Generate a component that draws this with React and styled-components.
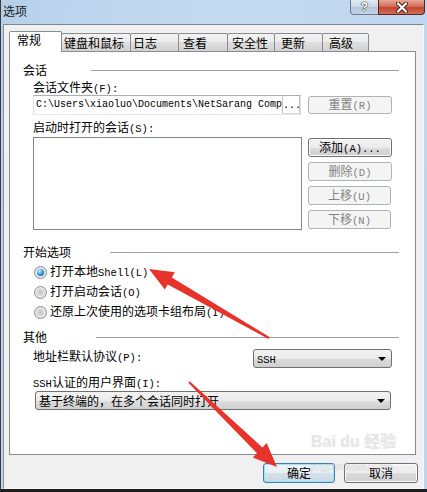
import React from "react";
import styled, { createGlobalStyle } from "styled-components";

const GlobalStyle = createGlobalStyle`
  html, body {
    margin: 0;
    padding: 0;
    background: #bcd4ec;
  }
  body {
    font-family: "Noto Sans CJK SC", "Liberation Sans", sans-serif;
    font-size: 12px;
    color: #000;
    text-autospace: no-autospace;
  }
  * {
    box-sizing: border-box;
  }
`;

const Window = styled.div`
  position: relative;
  width: 427px;
  height: 492px;
  display: flex;
  flex-direction: column;
  background: linear-gradient(100deg, #b7d0ea 0%, #c5dbf1 45%, #bcd4ee 100%);
  border-left: 1px solid #3c3c3c;
  border-bottom: 3px solid #1e1e1e;
  overflow: hidden;
`;

const TitleBar = styled.div`
  display: flex;
  align-items: flex-start;
  height: 24px;
`;

const Title = styled.div`
  padding: 4px 0 0 2px;
  line-height: 14px;
  color: #1b1b1b;
`;

const Controls = styled.div`
  display: flex;
  margin-left: auto;
  margin-right: 2px;
`;

const HelpButton = styled.div`
  width: 28px;
  height: 15px;
  border: 1px solid #6b7b8f;
  border-top: none;
  border-right: none;
  border-radius: 0 0 0 4px;
  background: linear-gradient(#e3ebf4, #c9d6e5 50%, #b6c6d9 50%, #c3d2e4);
  display: flex;
  align-items: center;
  justify-content: center;
  font-family: "Liberation Sans", sans-serif;
  font-weight: bold;
  font-size: 12px;
  line-height: 12px;
  color: #fff;
  text-shadow: 0 0 1px #333, 0 0 1px #333, 0 0 1px #333;
`;

const CloseButton = styled.div`
  width: 47px;
  height: 15px;
  border: 1px solid #5a231d;
  border-top: none;
  border-radius: 0 0 4px 0;
  background: linear-gradient(#e8a899, #d36f5f 45%, #c0452f 55%, #d0705a);
  display: flex;
  align-items: center;
  justify-content: center;
`;

const Client = styled.div`
  flex: 1;
  display: flex;
  flex-direction: column;
  margin: 0 3px 0 2px;
  border: 1px solid;
  border-color: #7e8691 #fafafa #f6f6f6 #8a8f96;
  background: #f0f0f0;
  padding: 6px 5px 5px 5px;
`;

const Tabs = styled.div`
  display: flex;
  align-items: flex-end;
  height: 21px;
  margin-bottom: -1px;
  position: relative;
  z-index: 1;
`;

const Tab = styled.div`
  width: ${(p) => p.$w}px;
  height: ${(p) => (p.$active ? 21 : 19)}px;
  margin-left: -1px;
  padding-left: ${(p) => p.$pad}px;
  border: 1px solid #898c95;
  border-bottom: ${(p) => (p.$active ? "none" : "1px solid #898c95")};
  border-radius: 2px 2px 0 0;
  background: ${(p) =>
    p.$active
      ? "#ffffff"
      : "linear-gradient(#f3f3f3 0%, #ebebeb 50%, #dedede 50%, #d2d2d2 100%)"};
  line-height: ${(p) => (p.$active ? 16 : 17)}px;
  position: relative;
  z-index: ${(p) => (p.$active ? 2 : 1)};
  white-space: nowrap;

  &:first-child {
    margin-left: 0;
  }
`;

const Panel = styled.div`
  flex: 1;
  margin-right: 2px;
  border: 1px solid #898c95;
  background: #fff;
  padding: 11px 16px 0 13px;
`;

const SectionHead = styled.div`
  display: flex;
  align-items: center;
  height: 14px;
  line-height: 14px;
  margin-top: ${(p) => p.$top || 0}px;
`;

const Rule = styled.div`
  flex: 1;
  height: 1px;
  background: #a0a0a0;
  margin-left: ${(p) => p.$gap}px;
`;

const SectionBody = styled.div`
  padding: 0 7px 0 10px;
`;

const Label = styled.div`
  line-height: 14px;
  height: 14px;
  margin-top: ${(p) => p.$top || 0}px;
  white-space: nowrap;
`;

const Latin = styled.span`
  font-family: "Liberation Mono", monospace;
  font-size: 10.5px;
`;

const Row = styled.div`
  display: flex;
  align-items: ${(p) => p.$align || "center"};
  margin-top: ${(p) => p.$top || 0}px;
`;

const PathField = styled.div`
  display: flex;
  width: 268px;
  height: 20px;
  border: 1px solid;
  border-color: #abadb3 #dbdfe6 #e3e9ef #e2e3ea;
  background: #fff;
`;

const PathText = styled.span`
  flex: 1;
  white-space: nowrap;
  font-family: "Liberation Mono", monospace;
  font-size: 10px;
  line-height: 18px;
  padding-left: 2px;
`;

const BrowseButton = styled.span`
  width: 18px;
  border-left: 1px solid #c4c4c4;
  border-right: 1px solid #c4c4c4;
  border-bottom: 1px solid #d8d8d8;
  font-family: "Liberation Mono", monospace;
  font-size: 10px;
  line-height: 20px;
  text-align: center;
`;

const Button = styled.button`
  width: ${(p) => p.$w}px;
  height: ${(p) => p.$h || 19}px;
  margin-left: ${(p) => (p.$push ? "auto" : "0")};
  padding: 0;
  border: 1px solid #707070;
  border-radius: 3px;
  background: linear-gradient(#f2f2f2 0%, #ebebeb 50%, #dddddd 50%, #cfcfcf 100%);
  box-shadow: inset 0 0 0 1px #fbfbfb;
  font: inherit;
  line-height: 14px;
  color: #000;

  &:disabled {
    border-color: #adb2b5;
    background: #f4f4f4;
    box-shadow: none;
    color: #838383;
  }
`;

const DefaultButton = styled(Button)`
  border-color: #3c7fb1;
  box-shadow: inset 0 0 0 1px #9fe2fb;
  background: linear-gradient(#f0f6fa 0%, #e6eef4 50%, #d6e1ea 50%, #cad7e2 100%);
`;

const ListBox = styled.div`
  width: 269px;
  height: 93px;
  border: 1px solid #828790;
  background: #fff;
`;

const ButtonColumn = styled.div`
  display: flex;
  flex-direction: column;
  align-items: flex-start;
  gap: 5px;
  margin-left: auto;
  padding-top: 1px;
`;

const RadioList = styled.div`
  margin-top: 3px;
`;

const RadioRow = styled.div`
  display: flex;
  align-items: center;
  gap: 3px;
  height: 20px;
  line-height: 14px;
  padding-left: 1px;
`;

const RadioText = styled.span`
  white-space: nowrap;
`;

const RadioDot = styled.span`
  position: relative;
  width: 13px;
  height: 13px;
  border-radius: 50%;
  border: 1px solid #8b8b8b;
  background: radial-gradient(circle at 50% 50%, #c2c2c2 0%, #e2e2e2 55%, #f7f7f7 100%);

  &::after {
    content: "";
    display: ${(p) => (p.$checked ? "block" : "none")};
    position: absolute;
    left: 2px;
    top: 2px;
    width: 7px;
    height: 7px;
    border-radius: 50%;
    background: radial-gradient(circle at 35% 30%, #c8f2ff 0%, #3fa4e6 45%, #0b4f8f 100%);
  }
`;

const Combo = styled.div`
  display: flex;
  align-items: center;
  width: ${(p) => p.$w}px;
  height: 19px;
  margin-left: ${(p) => (p.$push ? "auto" : "2px")};
  padding: 0 5px 0 3px;
  border: 1px solid #707070;
  border-radius: 3px;
  background: linear-gradient(#f2f2f2 0%, #ebebeb 50%, #dddddd 50%, #cfcfcf 100%);
  line-height: 14px;
  white-space: nowrap;
`;

const ComboText = styled.span`
  flex: 1;
`;

const Caret = styled.span`
  width: 0;
  height: 0;
  border-left: 4px solid transparent;
  border-right: 4px solid transparent;
  border-top: 4px solid #000;
`;

const Footer = styled.div`
  display: flex;
  justify-content: flex-end;
  gap: 9px;
  margin-top: 8px;
`;

const Watermark = styled.div`
  position: absolute;
  left: 310px;
  top: 434px;
  font-family: "Liberation Sans", "Noto Sans CJK SC", sans-serif;
  color: rgba(255, 255, 255, 0.35);
  text-shadow: 0 0 1px rgba(120, 120, 120, 0.3);
  pointer-events: none;
  line-height: 1;
`;

const MarkBig = styled.div`
  font-size: 16px;
  font-weight: bold;
`;

const MarkSmall = styled.div`
  font-size: 10px;
  margin-top: 12px;
`;

const Overlay = styled.svg`
  position: absolute;
  left: 0;
  top: 0;
  pointer-events: none;
`;

const tabs = [
  { label: "常规", w: 53, pad: 7, active: true },
  { label: "键盘和鼠标", w: 70, pad: 2 },
  { label: "日志", w: 49, pad: 2 },
  { label: "查看", w: 50, pad: 4 },
  { label: "安全性", w: 48, pad: 4 },
  { label: "更新", w: 49, pad: 6 },
  { label: "高级", w: 47, pad: 6 },
];

// tapered red annotation arrow, tail -> tip
const arrowPoints = (tail, tip, headLen = 24, headW = 10, neckW = 4, tailW = 1) => {
  const dx = tail[0] - tip[0];
  const dy = tail[1] - tip[1];
  const len = Math.hypot(dx, dy);
  const ux = dx / len;
  const uy = dy / len;
  const nx = -uy;
  const ny = ux;
  const bx = tip[0] + ux * headLen;
  const by = tip[1] + uy * headLen;
  const pts = [
    [tip[0], tip[1]],
    [bx + nx * headW, by + ny * headW],
    [bx + nx * neckW, by + ny * neckW],
    [tail[0] + nx * tailW, tail[1] + ny * tailW],
    [tail[0] - nx * tailW, tail[1] - ny * tailW],
    [bx - nx * neckW, by - ny * neckW],
    [bx - nx * headW, by - ny * headW],
  ];
  return pts.map((p) => p[0].toFixed(1) + "," + p[1].toFixed(1)).join(" ");
};

export default function App() {
  return (
    <>
      <GlobalStyle />
      <Window>
        <TitleBar>
          <Title>选项</Title>
          <Controls>
            <HelpButton>?</HelpButton>
            <CloseButton>
              <svg width="14" height="11" viewBox="0 0 14 11">
                <path d="M3 1.5 L11 9.5 M11 1.5 L3 9.5" stroke="#4a1f1a" strokeWidth="4" strokeLinecap="round" />
                <path d="M3 1.5 L11 9.5 M11 1.5 L3 9.5" stroke="#ffffff" strokeWidth="2.2" strokeLinecap="round" />
              </svg>
            </CloseButton>
          </Controls>
        </TitleBar>

        <Client>
          <Tabs>
            {tabs.map((t) => (
              <Tab key={t.label} $w={t.w} $pad={t.pad} $active={t.active}>
                {t.label}
              </Tab>
            ))}
          </Tabs>

          <Panel>
            <SectionHead>
              会话
              <Rule $gap={44} />
            </SectionHead>
            <SectionBody>
              <Label $top={3}>
                会话文件夹<Latin>(F):</Latin>
              </Label>
              <Row $top={1}>
                <PathField>
                  <PathText>C:\Users\xiaoluo\Documents\NetSarang Comp</PathText>
                  <BrowseButton>...</BrowseButton>
                </PathField>
                <Button $w={84} $h={18} $push disabled>
                  重置<Latin>(R)</Latin>
                </Button>
              </Row>
              <Label $top={5}>
                启动时打开的会话<Latin>(S):</Latin>
              </Label>
              <Row $top={3} $align="flex-start">
                <ListBox />
                <ButtonColumn>
                  <Button $w={84}>
                    添加<Latin>(A)...</Latin>
                  </Button>
                  <Button $w={84} disabled>
                    删除<Latin>(D)</Latin>
                  </Button>
                  <Button $w={83} disabled>
                    上移<Latin>(U)</Latin>
                  </Button>
                  <Button $w={83} disabled>
                    下移<Latin>(N)</Latin>
                  </Button>
                </ButtonColumn>
              </Row>
            </SectionBody>

            <SectionHead $top={15}>
              开始选项
              <Rule $gap={39} />
            </SectionHead>
            <SectionBody>
              <RadioList>
                <RadioRow>
                  <RadioDot $checked />
                  <RadioText>
                    打开本地<Latin>Shell(L)</Latin>
                  </RadioText>
                </RadioRow>
                <RadioRow>
                  <RadioDot />
                  <RadioText>
                    打开启动会话<Latin>(O)</Latin>
                  </RadioText>
                </RadioRow>
                <RadioRow>
                  <RadioDot />
                  <RadioText>
                    还原上次使用的选项卡组布局<Latin>(I)</Latin>
                  </RadioText>
                </RadioRow>
              </RadioList>
            </SectionBody>

            <SectionHead $top={8}>
              其他
              <Rule $gap={49} />
            </SectionHead>
            <SectionBody>
              <Row $top={5} $align="flex-start">
                <Label>
                  地址栏默认协议<Latin>(P):</Latin>
                </Label>
                <Combo $w={139} $push>
                  <ComboText>
                    <Latin>SSH</Latin>
                  </ComboText>
                  <Caret />
                </Combo>
              </Row>
              <Label $top={7}>
                <Latin>SSH</Latin>认证的用户界面<Latin>(I):</Latin>
              </Label>
              <Row $top={2}>
                <Combo $w={356}>
                  <ComboText>基于终端的，在多个会话同时打开</ComboText>
                  <Caret />
                </Combo>
              </Row>
            </SectionBody>
          </Panel>

          <Footer>
            <DefaultButton $w={72} $h={20}>
              确定
            </DefaultButton>
            <Button $w={74} $h={20}>
              取消
            </Button>
          </Footer>
        </Client>

        <Watermark>
          <MarkBig>Bai du 经验</MarkBig>
          <MarkSmall>jingyan.baidu.com</MarkSmall>
        </Watermark>

        <Overlay width="427" height="492" viewBox="0 0 427 492">
          <polygon points={arrowPoints([268, 338], [148, 269])} fill="#e8332a" />
          <polygon points={arrowPoints([188, 382], [276, 467])} fill="#e8332a" />
        </Overlay>
      </Window>
    </>
  );
}
